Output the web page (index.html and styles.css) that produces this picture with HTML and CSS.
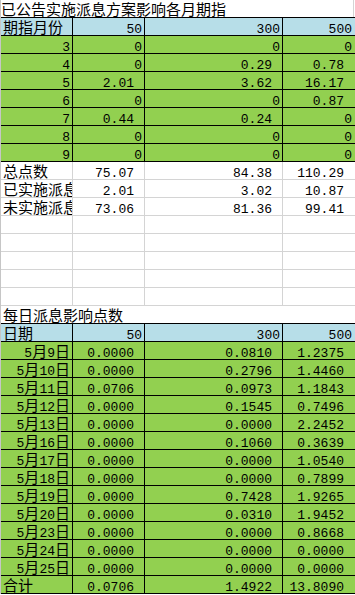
FILE: index.html
```html
<!DOCTYPE html>
<html lang="zh-CN">
<head>
<meta charset="utf-8">
<title>派息影响</title>
<link rel="stylesheet" href="styles.css">
</head>
<body>
<div class="sheet">
  <div class="title top"><span class="c">已公告实施派息方案影响各月期指</span></div>
  <div class="grid boxed">
    <div class="hd l"><span class="c">期指月份</span></div><div class="hd">50</div><div class="hd">300</div><div class="hd">500</div>
    <div>3</div><div>0</div><div>0</div><div>0</div>
    <div>4</div><div>0</div><div class="d">0.29</div><div class="d">0.78</div>
    <div>5</div><div class="d">2.01</div><div class="d">3.62</div><div class="d">16.17</div>
    <div>6</div><div>0</div><div>0</div><div class="d">0.87</div>
    <div>7</div><div class="d">0.44</div><div class="d">0.24</div><div>0</div>
    <div>8</div><div>0</div><div>0</div><div>0</div>
    <div>9</div><div>0</div><div>0</div><div>0</div>
  </div>
  <div class="grid plain">
    <div class="l"><span class="c">总点数</span></div><div class="d">75.07</div><div class="d">84.38</div><div class="d">110.29</div>
    <div class="l clip"><span class="c">已实施派息点数</span></div><div class="d">2.01</div><div class="d">3.02</div><div class="d">10.87</div>
    <div class="l clip"><span class="c">未实施派息点数</span></div><div class="d">73.06</div><div class="d">81.36</div><div class="d">99.41</div>
    <div></div><div></div><div></div><div></div>
    <div></div><div></div><div></div><div></div>
    <div></div><div></div><div></div><div></div>
    <div></div><div></div><div></div><div></div>
    <div></div><div></div><div></div><div></div>
  </div>
  <div class="title second"><span class="c">每日派息影响点数</span></div>
  <div class="grid boxed">
    <div class="hd l"><span class="c">日期</span></div><div class="hd">50</div><div class="hd">300</div><div class="hd">500</div>
    <div>5<span class="c">月</span>9<span class="c">日</span></div><div class="d">0.0000</div><div class="d">0.0810</div><div class="d">1.2375</div>
    <div>5<span class="c">月</span>10<span class="c">日</span></div><div class="d">0.0000</div><div class="d">0.2796</div><div class="d">1.4460</div>
    <div>5<span class="c">月</span>11<span class="c">日</span></div><div class="d">0.0706</div><div class="d">0.0973</div><div class="d">1.1843</div>
    <div>5<span class="c">月</span>12<span class="c">日</span></div><div class="d">0.0000</div><div class="d">0.1545</div><div class="d">0.7496</div>
    <div>5<span class="c">月</span>13<span class="c">日</span></div><div class="d">0.0000</div><div class="d">0.0000</div><div class="d">2.2452</div>
    <div>5<span class="c">月</span>16<span class="c">日</span></div><div class="d">0.0000</div><div class="d">0.1060</div><div class="d">0.3639</div>
    <div>5<span class="c">月</span>17<span class="c">日</span></div><div class="d">0.0000</div><div class="d">0.0000</div><div class="d">1.0540</div>
    <div>5<span class="c">月</span>18<span class="c">日</span></div><div class="d">0.0000</div><div class="d">0.0000</div><div class="d">0.7899</div>
    <div>5<span class="c">月</span>19<span class="c">日</span></div><div class="d">0.0000</div><div class="d">0.7428</div><div class="d">1.9265</div>
    <div>5<span class="c">月</span>20<span class="c">日</span></div><div class="d">0.0000</div><div class="d">0.0310</div><div class="d">1.9452</div>
    <div>5<span class="c">月</span>23<span class="c">日</span></div><div class="d">0.0000</div><div class="d">0.0000</div><div class="d">0.8668</div>
    <div>5<span class="c">月</span>24<span class="c">日</span></div><div class="d">0.0000</div><div class="d">0.0000</div><div class="d">0.0000</div>
    <div>5<span class="c">月</span>25<span class="c">日</span></div><div class="d">0.0000</div><div class="d">0.0000</div><div class="d">0.0000</div>
    <div class="l"><span class="c">合计</span></div><div class="d">0.0706</div><div class="d">1.4922</div><div class="d">13.8090</div>
  </div>
</div>
</body>
</html>
```
FILE: styles.css
```css
html, body {
  margin: 0;
  padding: 0;
  background: #ffffff;
}

body {
  font-family: "Liberation Mono", "Noto Sans CJK SC", monospace;
  font-size: 13px;
  color: #000000;
}

.sheet {
  width: 354px;
  border-left: 1px solid #c6c6c6;
  overflow: hidden;
}

.c {
  font-family: "Noto Sans CJK SC", sans-serif;
  font-size: 15px;
  line-height: 0;
}

.title {
  box-sizing: border-box;
  height: 17px;
  padding-top: 6px;
  line-height: 11px;
  white-space: nowrap;
}

.top {
  margin-right: 1px;
  border-right: 1px solid #d4d4d4;
  padding-left: 0;
}

.second {
  padding-left: 2px;
}

.grid {
  display: grid;
  grid-template-columns: 71px 71px 137px 1fr;
  grid-auto-rows: 17px;
  gap: 1px;
}

.grid > div {
  box-sizing: border-box;
  height: 17px;
  padding: 6px 2px 0 2px;
  line-height: 11px;
  white-space: nowrap;
  text-align: right;
}

.grid > div:nth-child(4n) {
  padding-right: 3px;
}

.grid > .d {
  padding-right: 10px;
}

.grid > .d:nth-child(4n) {
  padding-right: 11px;
}

.grid > .l {
  text-align: left;
}

.grid > .clip {
  overflow: hidden;
}

.boxed {
  background: #000000;
  border-top: 1px solid #000000;
  border-bottom: 1px solid #000000;
}

.boxed > div {
  background: #92d050;
}

.boxed > .hd {
  background: #b7dee8;
}

.plain {
  background: #d4d4d4;
  border-bottom: 1px solid #d4d4d4;
}

.plain > div {
  background: #ffffff;
}
```
